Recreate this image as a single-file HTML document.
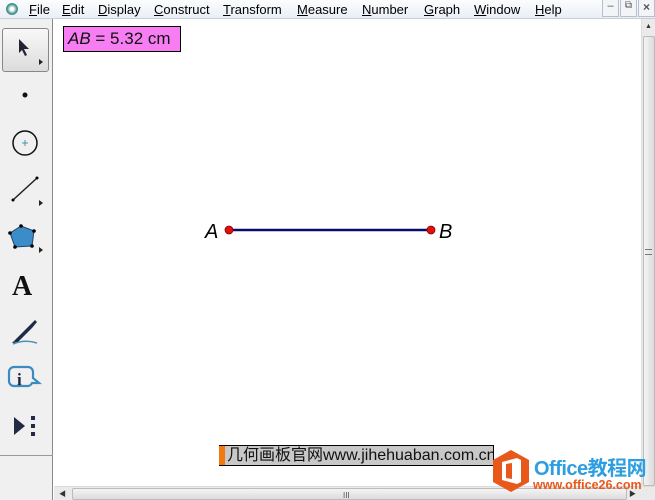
<!DOCTYPE html>
<html><head><meta charset="utf-8"><style>
*{margin:0;padding:0;box-sizing:border-box}
body{width:655px;height:500px;overflow:hidden;background:#fff;font-family:"Liberation Sans","Noto Sans CJK SC",sans-serif;position:relative}
.menu{position:absolute;left:0;top:0;width:655px;height:19px;background:linear-gradient(#fdfdfe,#e9eef7);border-bottom:1px solid #c9cfd8;font-size:13px;color:#000}
.menu span{position:absolute;top:2px}
.menu u{text-decoration:underline}
.tb{position:absolute;left:0;top:19px;width:53px;height:481px;background:#f0f0f0;border-right:1px solid #8a8a8a}
.abs{position:absolute}
.vs{position:absolute;left:641px;top:19px;width:14px;height:467px;background:#eaeaea;border-left:1px solid #ddd}
.hs{position:absolute;left:54px;top:486px;width:601px;height:14px;background:#eaeaea;border-top:1px solid #ddd}
</style></head><body>
<div class="menu">
<div class="abs" style="left:6px;top:3px;width:12px;height:12px;border-radius:50%;background:radial-gradient(#fff 20%,#3a8a8a 60%,#9bc 100%)"></div>
<span style="left:29px"><u>F</u>ile</span>
<span style="left:62px"><u>E</u>dit</span>
<span style="left:98px"><u>D</u>isplay</span>
<span style="left:154px"><u>C</u>onstruct</span>
<span style="left:223px"><u>T</u>ransform</span>
<span style="left:297px"><u>M</u>easure</span>
<span style="left:362px"><u>N</u>umber</span>
<span style="left:424px"><u>G</u>raph</span>
<span style="left:474px"><u>W</u>indow</span>
<span style="left:535px"><u>H</u>elp</span>
<div class="abs" style="left:602px;top:0;width:17px;height:17px;border:1px solid #b8bfca;border-top:none;background:#f2f4f8;font-size:11px;text-align:center;color:#555">–</div>
<div class="abs" style="left:620px;top:0;width:17px;height:17px;border:1px solid #b8bfca;border-top:none;background:#f2f4f8;font-size:10px;text-align:center;color:#555">⧉</div>
<div class="abs" style="left:638px;top:0;width:17px;height:17px;border:1px solid #b8bfca;border-top:none;background:#f2f4f8;font-size:12px;text-align:center;color:#555;font-weight:bold">×</div>
</div>
<div class="tb">
<div class="abs" style="left:2px;top:9px;width:47px;height:44px;border:1px solid #888;border-radius:3px;background:linear-gradient(#f8f8f8,#dcdcdc)"></div>
<svg class="abs" style="left:0;top:0" width="53" height="481">
<path d="M19 20 L19 34 L22 31 L25 37 L27 36 L24 30 L29 30 Z" fill="#223"/>
<path d="M39 40 l4 3 l-4 3z" fill="#222"/>
<circle cx="25" cy="76" r="2.5" fill="#111"/>
<circle cx="25" cy="124" r="12" fill="none" stroke="#111" stroke-width="1.5"/>
<path d="M22 124h6M25 121v6" stroke="#49a" stroke-width="1"/>
<path d="M13 181 L37 159" stroke="#222" stroke-width="1.5"/><circle cx="13" cy="181" r="1.5"/><circle cx="37" cy="159" r="1.5"/>
<path d="M39 181 l4 3 l-4 3z" fill="#222"/>
<path d="M21 207 L34 212 L32 227 L15 228 L10 214 Z" fill="#3b8cc8" stroke="#246" stroke-width="1"/>
<circle cx="21" cy="207" r="1.8"/><circle cx="34" cy="212" r="1.8"/><circle cx="32" cy="227" r="1.8"/><circle cx="15" cy="228" r="1.8"/><circle cx="10" cy="214" r="1.8"/>
<path d="M39 228 l4 3 l-4 3z" fill="#222"/>
<text x="12" y="276" font-family="Liberation Serif" font-weight="bold" font-size="28" fill="#111">A</text>
<path d="M14 322 L30 306 L35 301 L37 303 L32 309 L17 324 Z" fill="#1f2a44"/>
<path d="M12 324 L14 322 L17 324 Z" fill="#333"/>
<path d="M13 325 Q25 320 37 324" stroke="#4a90c0" stroke-width="1.5" fill="none"/>
<path d="M14 348 h14 a5 5 0 0 1 5 5 v6 l6 5 h-7 a5 5 0 0 1 -4 3 h-14 a5 5 0 0 1 -5 -5 v-9 a5 5 0 0 1 5 -5z" fill="none" stroke="#3a8cc0" stroke-width="2.2"/>
<text x="17" y="366" font-family="Liberation Serif" font-weight="bold" font-size="17" fill="#1a2340">i</text>
<path d="M14 398 L25 407 L14 416 Z" fill="#222a44"/>
<rect x="31" y="397" width="4" height="4" fill="#222a44"/><rect x="31" y="405" width="4" height="4" fill="#222a44"/><rect x="31" y="413" width="4" height="4" fill="#222a44"/>
</svg>
<div class="abs" style="left:0;top:436px;width:53px;height:1px;background:#999"></div>
</div>
<div class="abs" style="left:63px;top:26px;width:118px;height:26px;border:1px solid #000;background:#f77ef2;font-size:17px;padding:2px 0 0 4px;color:#111"><i>AB</i> = 5.32 cm</div>
<svg class="abs" style="left:0;top:0" width="655" height="500">
<line x1="229" y1="230" x2="431" y2="230" stroke="#0b0b6b" stroke-width="2.5"/>
<circle cx="229" cy="230" r="4" fill="#e01010" stroke="#800" stroke-width="0.8"/>
<circle cx="431" cy="230" r="4" fill="#e01010" stroke="#800" stroke-width="0.8"/>
<text x="205" y="238" font-size="20" font-style="italic" font-family="Liberation Sans">A</text>
<text x="439" y="238" font-size="20" font-style="italic" font-family="Liberation Sans">B</text>
</svg>
<div class="vs">
<div class="abs" style="left:3px;top:4px;font-size:7px;color:#333">▲</div>
<div class="abs" style="left:1px;top:17px;width:12px;height:450px;background:linear-gradient(90deg,#f4f4f4,#dcdcdc);border:1px solid #bbb;border-radius:2px"></div>
<div class="abs" style="left:3px;top:230px;width:7px;height:6px;border-top:1px solid #777;border-bottom:1px solid #777"></div>
</div>
<div class="hs">
<div class="abs" style="left:5px;top:2px;font-size:7px;color:#333">◀</div>
<div class="abs" style="left:18px;top:1px;width:555px;height:12px;background:linear-gradient(#f4f4f4,#dcdcdc);border:1px solid #bbb;border-radius:2px"></div>
<div class="abs" style="left:289px;top:4px;font-size:8px;color:#555">III</div>
<div class="abs" style="left:575px;top:2px;font-size:7px;color:#333">▶</div>
</div>
<div class="abs" style="left:219px;top:445px;width:275px;height:21px;border:1px solid #000;background:#c8c8c8;font-size:16px;line-height:19px;padding-left:7px;color:#111;white-space:nowrap;overflow:hidden">几何画板官网www.jihehuaban.com.cn</div>
<div class="abs" style="left:219px;top:446px;width:6px;height:19px;background:#f07a10"></div>
<svg class="abs" style="left:491px;top:448px" width="40" height="46">
<path d="M20 2 L38 12 L38 34 L20 44 L2 34 L2 12 Z" fill="#e8581b"/>
<path d="M11 14 L26 10 L30 12 L30 34 L26 36 L11 32 Z M15 16 L15 30 L21 31 L21 15 Z" fill="#fff" fill-rule="evenodd"/>
</svg>
<div class="abs" style="left:534px;top:452px;font-size:20px;font-weight:bold;color:#2e9ee0;letter-spacing:-0.5px;white-space:nowrap">Office教程网</div>
<div class="abs" style="left:533px;top:478px;font-size:12.5px;font-weight:bold;color:#e8581b;white-space:nowrap">www.office26.com</div>
</body></html>
